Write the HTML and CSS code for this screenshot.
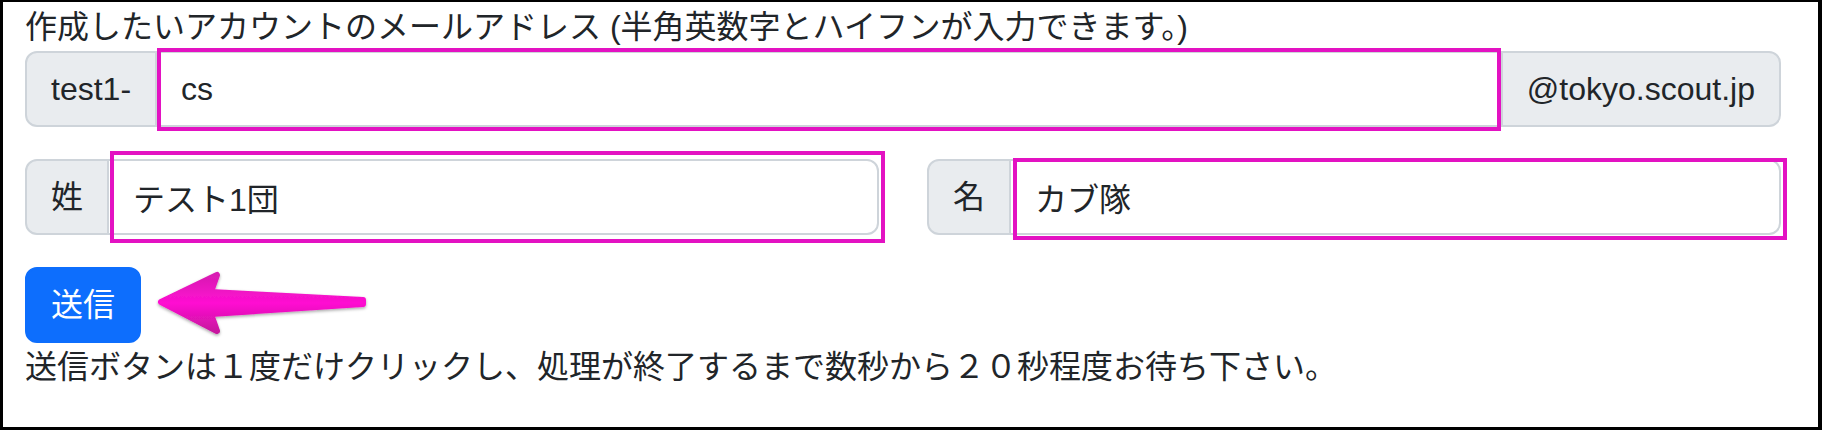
FILE: index.html
```html
<!DOCTYPE html>
<html lang="ja">
<head>
<meta charset="utf-8">
<title>アカウント作成</title>
<link rel="stylesheet" href="styles.css">
</head>
<body>
<div class="frame">
  <div class="label">作成したいアカウントのメールアドレス (半角英数字とハイフンが入力できます。)</div>
  <div class="group">
    <span class="addon addon-first">test1-</span>
    <div class="field field-mid">
      <input class="control control-mid" type="text" value="cs">
      <span class="mark mark-1"></span>
    </div>
    <span class="addon addon-last">@tokyo.scout.jp</span>
  </div>
  <div class="names">
    <div class="group">
      <span class="addon addon-first">姓</span>
      <div class="field">
        <input class="control" type="text" value="テスト1団">
        <span class="mark mark-2"></span>
      </div>
    </div>
    <div class="group">
      <span class="addon addon-first">名</span>
      <div class="field">
        <input class="control" type="text" value="カブ隊">
        <span class="mark mark-3"></span>
      </div>
    </div>
  </div>
  <div class="actions">
    <button class="btn" type="button">送信</button>
    <svg class="arrow" width="240" height="80" viewBox="0 0 240 80" aria-hidden="true">
      <defs>
        <linearGradient id="ag" x1="0" y1="0" x2="0" y2="1">
          <stop offset="0" stop-color="#d81bb2"/>
          <stop offset="0.5" stop-color="#ff0fd2"/>
          <stop offset="1" stop-color="#c8149f"/>
        </linearGradient>
        <filter id="sh" x="-10%" y="-20%" width="120%" height="150%">
          <feDropShadow dx="0" dy="1.5" stdDeviation="1.5" flood-color="#000" flood-opacity="0.35"/>
        </filter>
      </defs>
      <polygon points="18,37 74,10 68,27 220,35 220,39 68,49 74,66" fill="url(#ag)" stroke="url(#ag)" stroke-width="6" stroke-linejoin="round" filter="url(#sh)"/>
    </svg>
  </div>
  <p class="note">送信ボタンは１度だけクリックし、処理が終了するまで数秒から２０秒程度お待ち下さい。</p>
</div>
</body>
</html>
```

FILE: styles.css
```css
* {
  box-sizing: border-box;
}

html, body {
  margin: 0;
  padding: 0;
  background: #fff;
}

.frame {
  width: 1822px;
  height: 430px;
  border-style: solid;
  border-color: #000;
  border-width: 2px 4px 3px 3px;
  padding: 1px 37px 0 22px;
  font-family: "Liberation Sans", "Noto Sans CJK JP", sans-serif;
  font-size: 32px;
  line-height: 48px;
  color: #212529;
  overflow: hidden;
}

.label {
  height: 48px;
  white-space: nowrap;
}

.group {
  display: flex;
  align-items: stretch;
  width: 100%;
}

.addon {
  display: flex;
  align-items: center;
  padding: 12px 24px;
  background: #e9ecef;
  border: 2px solid #ced4da;
  font-size: 32px;
  line-height: 48px;
  white-space: nowrap;
  color: #212529;
}

.addon-first {
  border-radius: 12px 0 0 12px;
}

.addon-last {
  border-radius: 0 12px 12px 0;
  margin-left: -2px;
}

.field {
  position: relative;
  flex: 1 1 auto;
  min-width: 0;
  display: flex;
  margin-left: -2px;
}

.control {
  display: block;
  width: 100%;
  height: 76px;
  margin: 0;
  padding: 12px 24px;
  border: 2px solid #ced4da;
  border-radius: 0 12px 12px 0;
  background: #fff;
  font-family: inherit;
  font-size: 32px;
  line-height: 48px;
  color: #212529;
  outline: none;
}

.control-mid {
  border-radius: 0;
}

.mark {
  position: absolute;
  border: 4px solid #e312c2;
  pointer-events: none;
}

.mark-1 {
  left: 2px;
  right: 2px;
  top: -3px;
  bottom: -4px;
}

.mark-2 {
  left: 3px;
  right: -6px;
  top: -8px;
  bottom: -8px;
}

.mark-3 {
  left: 4px;
  right: -6px;
  top: -1px;
  bottom: -5px;
}

.names {
  display: grid;
  grid-template-columns: 1fr 1fr;
  column-gap: 48px;
  margin-top: 32px;
}

.actions {
  position: relative;
  margin-top: 32px;
  height: 76px;
}

.btn {
  display: block;
  height: 76px;
  margin: 0;
  padding: 12px 24px;
  border: 2px solid #0d6efd;
  border-radius: 12px;
  background: #0d6efd;
  color: #fff;
  font-family: inherit;
  font-size: 32px;
  line-height: 48px;
}

.arrow {
  position: absolute;
  left: 118px;
  top: -2px;
}

.note {
  margin: 0;
  white-space: nowrap;
}
```
